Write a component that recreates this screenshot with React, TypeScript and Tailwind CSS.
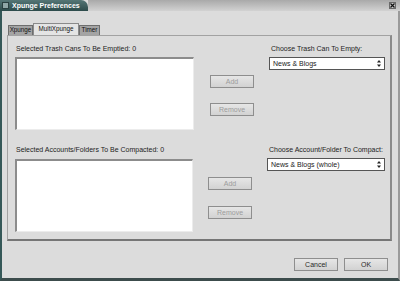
import React from "react";

function Btn({ label, disabled, w = "w-[44px]" }: { label: string; disabled?: boolean; w?: string }) {
  return (
    <div
      className={`${w} h-[13px] flex items-center justify-center border border-[#8e8e8e] bg-gradient-to-b from-[#e6e6e6] to-[#d2d2d2] text-[7px] leading-none ${
        disabled ? "text-[#9c9c9c]" : "text-[#2a2a2a]"
      }`}
    >
      {label}
    </div>
  );
}

function Select({ label }: { label: string }) {
  return (
    <div className="h-[13px] flex items-center justify-between bg-white border border-[#555] pl-[3px] pr-[3px] text-[7px] leading-none text-[#1a1a1a]">
      <span>{label}</span>
      <svg width="4" height="7" viewBox="0 0 4 7">
        <polygon points="2,0 4,2.6 0,2.6" fill="#222" />
        <polygon points="0,4.4 4,4.4 2,7" fill="#222" />
      </svg>
    </div>
  );
}

function ListBox({ h = "h-[73px]" }: { h?: string }) {
  return (
    <div className={`${h} bg-white border-t-2 border-l-2 border-t-[#8c8c8c] border-l-[#8c8c8c] border-b border-r border-b-[#ececec] border-r-[#ececec]`} />
  );
}

export default function App() {
  return (
    <div className="w-[400px] h-[281px] overflow-hidden bg-[#dcdcdc] flex flex-col font-['Liberation_Sans',Arial,sans-serif]">
      {/* Title bar */}
      <div className="h-[11px] flex shrink-0">
        <div className="w-[88px] bg-gradient-to-b from-[#557676] to-[#2d4b4b] flex items-center pl-[2px] rounded-tr-[7px]">
          <div className="w-[7px] h-[7px] bg-[#8fa6a6] border border-[#2a4040]" />
          <span className="ml-[3px] text-white font-bold text-[7px] leading-none">Xpunge Preferences</span>
        </div>
        <div className="flex-1 bg-gradient-to-b from-[#a9a9a9] to-[#d2d2d2] flex items-center justify-end pr-[4px]">
          <div className="w-[7px] h-[7px] bg-[#c8c8c8] border border-[#6a6a6a] flex items-center justify-center">
            <svg width="5" height="5" viewBox="0 0 5 5">
              <path d="M0.5 0.5 L4.5 4.5 M4.5 0.5 L0.5 4.5" stroke="#111" strokeWidth="1.2" />
            </svg>
          </div>
        </div>
      </div>

      {/* Body */}
      <div className="flex-1 flex flex-col border-l-2 border-l-[#355858] border-r-2 border-r-[#9a9a9a] border-b-[3px] border-b-[#3c4c4c]">
        {/* Tabs */}
        <div className="flex items-end ml-[6px] mt-[12px] h-[12px] text-[6.3px] leading-none">
          <div className="h-[10px] w-[25px] flex items-center justify-center bg-[#a4a4a4] border border-[#6e6e6e] border-b-0 text-[#111] whitespace-nowrap">
            Xpunge
          </div>
          <div className="h-[12px] w-[46px] flex items-center justify-center bg-[#e4e4e4] border border-[#8a8a8a] border-b-0 text-[#111] whitespace-nowrap">
            MultiXpunge
          </div>
          <div className="h-[10px] w-[21px] flex items-center justify-center bg-[#a4a4a4] border border-[#6e6e6e] border-b-0 text-[#111] whitespace-nowrap">
            Timer
          </div>
        </div>

        {/* Panel */}
        <div className="ml-[5px] w-[385px] h-[206px] border border-[#a2a2a2] border-b-2 border-r-2 border-b-[#767676] border-r-[#8a8a8a] pl-[7px] pt-[7px] text-[7px] leading-none text-[#1c1c1c]">
          {/* Row 1 */}
          <div className="flex">
            <div className="w-[179px] flex flex-col">
              <div className="h-[10px] flex items-center pl-[1px]">Selected Trash Cans To Be Emptied: 0</div>
              <div className="mt-[4px]">
                <ListBox />
              </div>
            </div>
            <div className="ml-[16px] w-[44px] flex flex-col">
              <div className="mt-[32px]">
                <Btn label="Add" disabled />
              </div>
              <div className="mt-[15px]">
                <Btn label="Remove" disabled />
              </div>
            </div>
            <div className="ml-[15px] w-[116px] flex flex-col">
              <div className="h-[10px] flex items-center pl-[2px]">Choose Trash Can To Empty:</div>
              <div className="mt-[4px]">
                <Select label="News & Blogs" />
              </div>
            </div>
          </div>

          {/* Row 2 */}
          <div className="flex mt-[14px]">
            <div className="w-[178px] flex flex-col">
              <div className="h-[10px] flex items-center pl-[1px]">Selected Accounts/Folders To Be Compacted: 0</div>
              <div className="mt-[5px]">
                <ListBox />
              </div>
            </div>
            <div className="ml-[15px] w-[44px] flex flex-col">
              <div className="mt-[33px]">
                <Btn label="Add" disabled />
              </div>
              <div className="mt-[16px]">
                <Btn label="Remove" disabled />
              </div>
            </div>
            <div className="ml-[15px] w-[118px] flex flex-col">
              <div className="h-[10px] flex items-center pl-[2px]">Choose Account/Folder To Compact:</div>
              <div className="mt-[4px]">
                <Select label="News & Blogs (whole)" />
              </div>
            </div>
          </div>
        </div>

        {/* Bottom buttons */}
        <div className="flex justify-end gap-[6px] pr-[10px] mt-[17px]">
          <Btn label="Cancel" />
          <Btn label="OK" />
        </div>
      </div>
    </div>
  );
}
